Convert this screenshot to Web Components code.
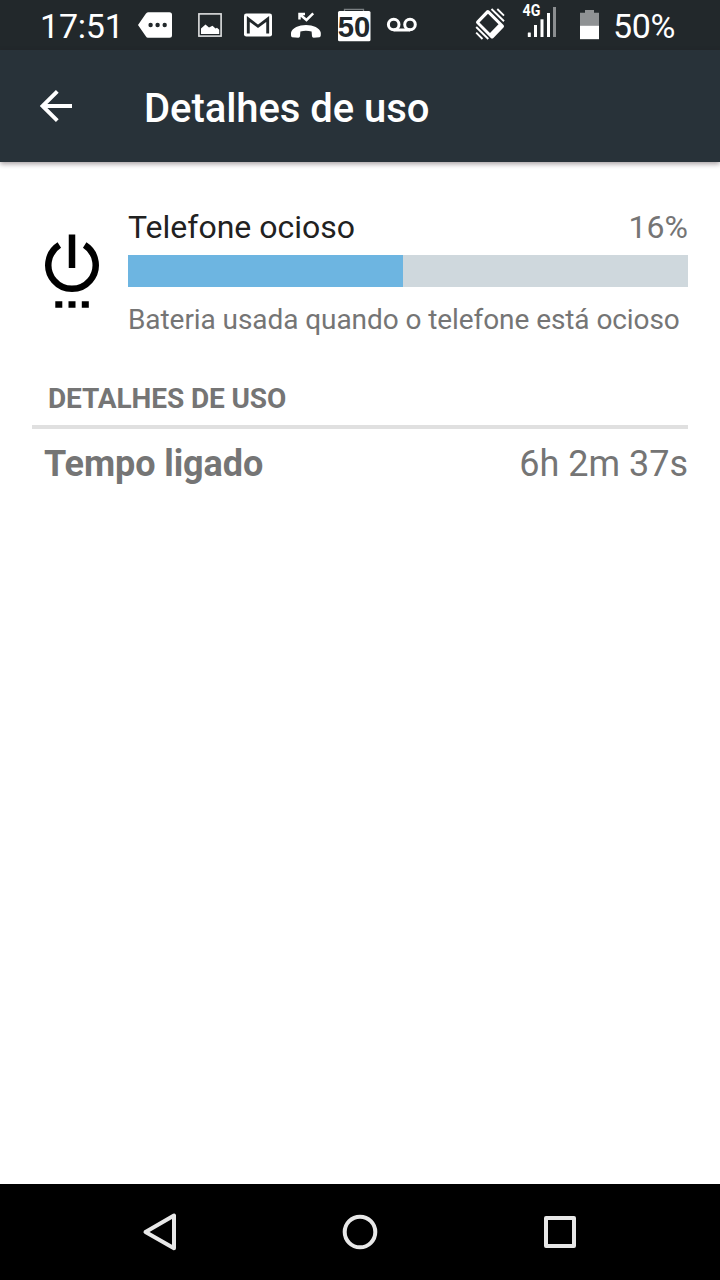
<!DOCTYPE html>
<html lang="pt-BR">
<head>
<meta charset="utf-8">
<title>Detalhes de uso</title>
<style>
html,body{margin:0;height:100%;background:#fff;overflow:hidden}
body{font-family:Roboto,"Noto Sans",sans-serif}
</style>
</head>
<body>
<usage-screen></usage-screen>
<script>
const define = (name, css, html) => customElements.define(name, class extends HTMLElement {
  constructor() {
    super();
    this.attachShadow({ mode: 'open' }).innerHTML = `<style>${css}</style>${html}`;
  }
});

define('status-bar', `
  :host{display:flex;height:50px;background:#22282b;color:#fff;font-size:34px;line-height:53px;white-space:nowrap}
  svg{display:block;flex:none;height:50px}
  .time{width:92px;padding-left:40px;letter-spacing:-.2px}
  .gap{flex:1}
  .level{width:107px;letter-spacing:-.3px}
  .day{font:bold 30px "Liberation Sans",sans-serif}
  .net{font:bold 16.5px Roboto,sans-serif}
`, `
  <span class="time">17:51</span>
  <svg width="52" viewBox="132 0 52 50"><path fill="#fff" d="M148 12.300h21.500q2.500 0 2.500 2.500v20.400q0 2.500-2.500 2.500H148q-1.300 0-2.200-1.500L138 25l7.800-11.200q.9-1.500 2.200-1.500z"/><g fill="#22282b"><circle cx="150.600" cy="25" r="2.200"/><circle cx="157.600" cy="25" r="2.200"/><circle cx="164.700" cy="25" r="2.200"/></g></svg>
  <svg width="50" viewBox="184 0 50 50"><rect x="198.900" y="13.900" width="22.200" height="22.200" fill="none" stroke="#dfe0e1" stroke-width="1.600"/><path fill="#fff" d="M201 34v-5.500l4.500-4 3.500 3 3.500-1.800 3 2.800 1.500-.8 2.200 2V34z"/></svg>
  <svg width="48" viewBox="234 0 48 50"><rect x="244" y="13.500" width="28" height="23" rx="2.300" fill="#fff"/><path d="M248.300 33.500V19l9.700 7.300 9.700-7.300v14.500" fill="none" stroke="#22282b" stroke-width="2.900"/></svg>
  <svg width="48" viewBox="282 0 48 50"><path d="M299.500 19.500v-5.500h5.500M300 14.500l6.500 5.500 6.700-6.600" fill="none" stroke="#fff" stroke-width="2.500"/><path fill="#fff" d="M292 37.200q-1-.4-1-2v-2.400C292 28 299 25 306 25s14 3 14.800 7.800v2.400q0 1.600-1.200 2l-6 .5q-1.400 0-1.600-1.400l-.4-4.800q-5.600-1.600-11.200 0l-.4 4.800q-.2 1.400-1.600 1.400z"/></svg>
  <svg width="48" viewBox="330 0 48 50"><path d="M344.500 12V9.300h19V12" fill="none" stroke="#7b8083" stroke-width="1.300"/><rect x="338" y="11" width="32.500" height="30.300" rx="1.500" fill="#fff"/><text class="day" x="337.800" y="36.600" textLength="32.500" lengthAdjust="spacingAndGlyphs" fill="#22282b">50</text></svg>
  <svg width="48" viewBox="378 0 48 50"><g fill="none" stroke="#fff" stroke-width="3"><circle cx="393.700" cy="24.500" r="5.300"/><circle cx="410" cy="24.500" r="5.300"/><path d="M393.700 30H410"/></g></svg>
  <span class="gap"></span>
  <svg width="48" viewBox="468 0 48 50"><path fill="#fff" fill-rule="evenodd" d="M486.500 10.500q1.300-1.200 2.600 0L503.500 25q1.200 1.300 0 2.600L493.400 38q-1.300 1.200-2.600 0L476.500 23.500q-1.200-1.300 0-2.600zM488 13.800 479.500 22.400 490 32.900 498.500 24.300z"/><g stroke="#fff" stroke-width="1.900"><path d="M491.500 9 504 21.300M497.300 9 504 15.600M476.200 27 488.300 39M476.200 32.700l6.300 6.300"/></g></svg>
  <svg width="52" viewBox="516 0 52 50"><text class="net" x="522.600" y="15.600" textLength="17.800" lengthAdjust="spacingAndGlyphs" fill="#fff">4G</text><g fill="#fff"><rect x="527.800" y="32.500" width="3" height="4.500" rx=".5"/><rect x="534" y="25" width="3" height="12"/><rect x="540.500" y="19.300" width="3" height="17.700"/><rect x="547" y="13" width="3" height="24"/></g><rect x="553" y="7" width="3" height="30" fill="#8b8e90"/></svg>
  <svg width="45" viewBox="568 0 45 50"><path fill="#8f9294" d="M580 12.800h5V10h9v2.800h5V26h-19z"/><path fill="#fff" d="M580 25.800h19v13.400h-19z"/></svg>
  <span class="level">50%</span>
`);

define('app-bar', `
  :host{display:flex;align-items:center;height:112px;background:#283239;color:#fff;box-shadow:0 2px 5px rgba(40,25,30,.42);z-index:1;font-size:40px;font-weight:500}
  svg{display:block;flex:none;margin:0 72px 0 40px}
  h1{margin:0;padding-top:6px;font:inherit;line-height:48px;letter-spacing:-.06px}
`, `
  <svg width="32" height="34" viewBox="40 89 32 34"><path d="M72 106H43M57.300 91.300 42.500 106l14.800 14.700" fill="none" stroke="#fff" stroke-width="3.900"/></svg>
  <h1><slot></slot></h1>
`);

define('power-summary', `
  :host{display:flex;padding:46px 32px 0}
  .icon{display:block;flex:none;margin:24px 16px 0 0}
  .body{flex:1}
  .head{display:flex;justify-content:space-between;height:38px;font-size:32px;line-height:38px;color:#212121}
  .pct,.note{color:#757575}
  .track{margin-top:9px;height:32px;background:#cfd8dd}
  .fill{width:275px;height:32px;background:#6db5e1}
  .note{margin-top:16px;font-size:28px;line-height:34px;white-space:nowrap;letter-spacing:-.075px}
`, `
  <svg class="icon" width="80" height="80" viewBox="32 232 80 80"><g fill="none" stroke="#000" stroke-width="6.500"><path d="M72 234.500V268"/><path d="M59.300 245.100A23.700 23.700 0 1 0 84.700 245.100"/></g><path d="M55.300 301.300h7v6.500h-7zM68.500 301.300h7v6.500h-7zM81.800 301.300h7v6.500h-7z"/></svg>
  <div class="body">
    <div class="head"><slot name="name"></slot><span class="pct"><slot name="percent"></slot></span></div>
    <div class="track"><div class="fill"></div></div>
    <div class="note"><slot></slot></div>
  </div>
`);

define('section-title', `
  :host{display:block;margin:45px 32px 0;padding:0 16px 9px;border-bottom:4px solid #e0e0e0;color:#757575;font-size:28px;font-weight:700;line-height:34px;text-transform:uppercase;letter-spacing:-.1px}
`, `<slot></slot>`);

define('detail-row', `
  :host{display:flex;justify-content:space-between;padding:14px 32px 0 44px;color:#757575;font-size:36px;line-height:42px}
  b{font-weight:700;letter-spacing:-.1px}
`, `<b><slot name="label"></slot></b><span><slot></slot></span>`);

define('navigation-bar', `
  :host{display:flex;justify-content:center;gap:136px;align-items:center;height:96px;background:#000}
  svg{display:block;fill:none;stroke:#e8e8e8;stroke-width:4;stroke-linejoin:round}
`, `
  <svg width="64" height="64" viewBox="128 1200 64 64"><path d="M145.500 1232 174 1215.500V1248.300z"/></svg>
  <svg width="64" height="64" viewBox="328 1200 64 64"><circle cx="360" cy="1232" r="15.300"/></svg>
  <svg width="64" height="64" viewBox="528 1200 64 64"><rect x="546" y="1218" width="28" height="28"/></svg>
`);

define('usage-screen', `
  :host{display:flex;flex-direction:column;width:720px;height:1280px;background:#fff}
  main{flex:1}
`, `
  <status-bar></status-bar>
  <app-bar>Detalhes de uso</app-bar>
  <main>
    <power-summary><span slot="name">Telefone ocioso</span><span slot="percent">16%</span>Bateria usada quando o telefone está ocioso</power-summary>
    <section-title>Detalhes de uso</section-title>
    <detail-row><span slot="label">Tempo ligado</span>6h 2m 37s</detail-row>
  </main>
  <navigation-bar></navigation-bar>
`);
</script>
</body>
</html>
